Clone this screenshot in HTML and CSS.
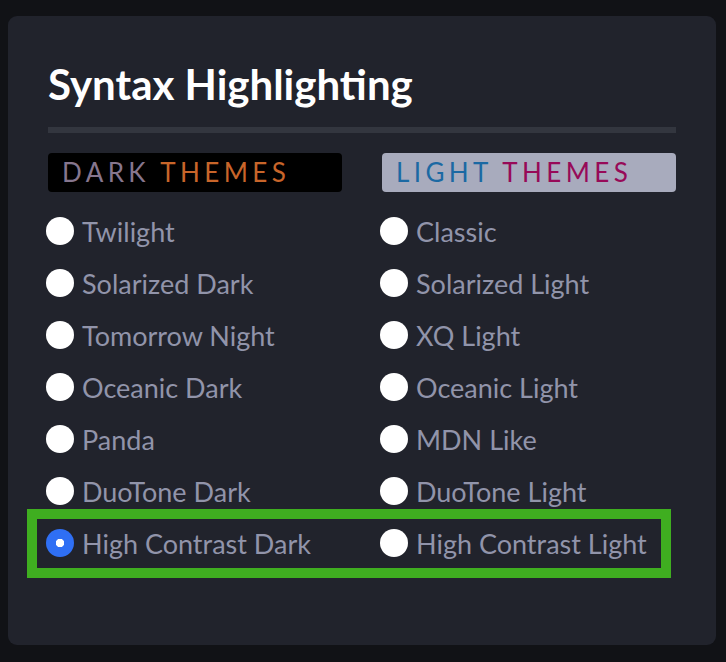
FILE: index.html
```html
<!DOCTYPE html>
<html lang="en">
<head>
    <meta charset="UTF-8">
    <meta name="viewport" content="width=device-width, initial-scale=1.0">
    <title>Syntax Highlighting</title>
    <link rel="stylesheet" href="styles.css">
</head>
<body>
    <div class="panel">
        <h1>Syntax Highlighting</h1>
        <hr class="rule">

        <div class="themes">
            <div class="column">
                <div class="tag tag-dark"><span class="word-a">DARK</span> <span class="word-b">THEMES</span></div>
                <label class="option"><input type="radio" name="theme"> Twilight</label>
                <label class="option"><input type="radio" name="theme"> Solarized Dark</label>
                <label class="option"><input type="radio" name="theme"> Tomorrow Night</label>
                <label class="option"><input type="radio" name="theme"> Oceanic Dark</label>
                <label class="option"><input type="radio" name="theme"> Panda</label>
                <label class="option"><input type="radio" name="theme"> DuoTone Dark</label>
                <label class="option"><input type="radio" name="theme" checked> High Contrast Dark</label>
            </div>
            <div class="column">
                <div class="tag tag-light"><span class="word-a">LIGHT</span> <span class="word-b">THEMES</span></div>
                <label class="option"><input type="radio" name="theme"> Classic</label>
                <label class="option"><input type="radio" name="theme"> Solarized Light</label>
                <label class="option"><input type="radio" name="theme"> XQ Light</label>
                <label class="option"><input type="radio" name="theme"> Oceanic Light</label>
                <label class="option"><input type="radio" name="theme"> MDN Like</label>
                <label class="option"><input type="radio" name="theme"> DuoTone Light</label>
                <label class="option"><input type="radio" name="theme"> High Contrast Light</label>
            </div>
        </div>

        <!-- marks the high contrast pair -->
        <div class="highlight"></div>
    </div>
</body>
</html>
```

FILE: styles.css
```css
body {
    font-family: Lato, "Noto Sans", sans-serif;
    margin: 0;
    padding: 16px 10px 18px 8px;
    background-color: #111216;
}
.panel {
    position: relative;
    width: 708px;
    box-sizing: border-box;
    padding: 44px 40px 76px 40px;
    background-color: #21232c;
    border-radius: 9px;
}
h1 {
    margin: 0;
    font-size: 42px;
    line-height: 48px;
    font-weight: 700;
    color: #ffffff;
}
.rule {
    margin: 19px 0 0 0;
    height: 6px;
    border: none;
    background-color: #33363f;
}
.themes {
    display: grid;
    grid-template-columns: 294px 294px;
    column-gap: 40px;
    margin-top: 20px;
}
.column {
    display: flex;
    flex-direction: column;
}
.tag {
    height: 39px;
    line-height: 39px;
    padding-left: 14px;
    margin-bottom: 13px;
    border-radius: 4px;
    font-size: 26px;
    letter-spacing: 4.4px;
    white-space: nowrap;
}
.tag-dark {
    background-color: #000000;
}
.tag-dark .word-a {
    color: #86768e;
}
.tag-dark .word-b {
    color: #c8652a;
}
.tag-light {
    background-color: #a8abbd;
}
.tag-light .word-a {
    color: #1b69a3;
}
.tag-light .word-b {
    color: #970a58;
}
.option {
    display: flex;
    align-items: center;
    height: 52px;
    font-size: 27px;
    color: #9194aa;
    white-space: nowrap;
    cursor: pointer;
}
.option input[type="radio"] {
    appearance: none;
    -webkit-appearance: none;
    width: 28px;
    height: 28px;
    margin: 0 8px 0 -2px;
    border-radius: 50%;
    background-color: #ffffff;
    flex-shrink: 0;
}
.option input[type="radio"]:checked {
    background-color: #2f6ff4;
    background-image: radial-gradient(circle, #ffffff 0, #ffffff 4px, transparent 4.5px);
}
/* Annotation box over the last row */
.highlight {
    position: absolute;
    left: 19px;
    top: 493px;
    width: 624px;
    height: 49px;
    border: 10px solid #3fae20;
    pointer-events: none;
}
```
